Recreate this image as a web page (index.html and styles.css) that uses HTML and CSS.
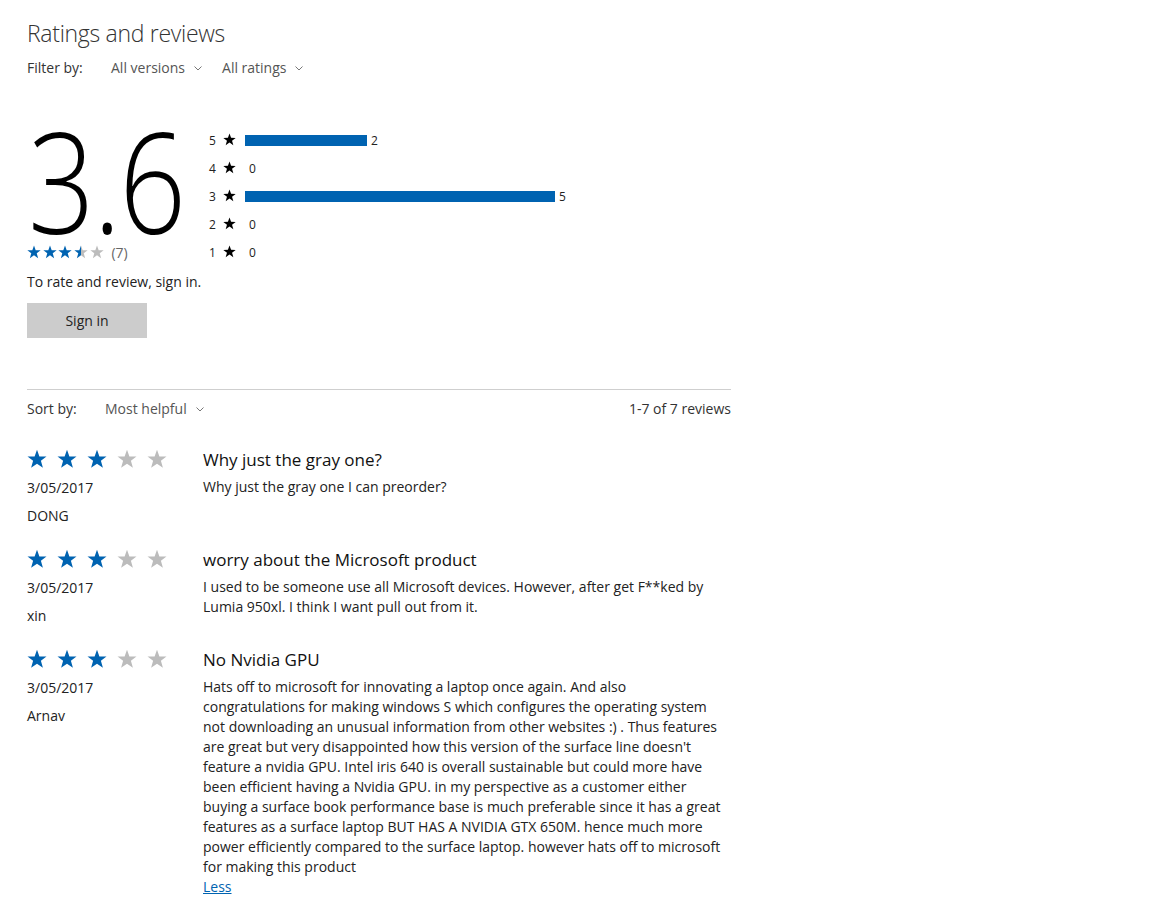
FILE: index.html
```html
<!DOCTYPE html>
<html>
<head>
<meta charset="utf-8">
<link rel="stylesheet" href="styles.css">
</head>
<body>
<svg width="0" height="0" class="defs">
  <defs>
    <symbol id="star" viewBox="0 0 20 20"><polygon points="10,0.8 12.4,7.4 19.5,7.5 13.9,11.8 15.9,18.8 10,14.7 4.1,18.8 6.1,11.8 0.5,7.5 7.6,7.4"/></symbol>
    <symbol id="chev" viewBox="0 0 8 5"><polyline points="0.5,0.5 4,4 7.5,0.5" fill="none" stroke="#777" stroke-width="1"/></symbol>
    <linearGradient id="half"><stop offset="50%" stop-color="#0063b1"/><stop offset="50%" stop-color="#bcbcbc"/></linearGradient>
  </defs>
</svg>
<main class="page">
  <h1 class="title">Ratings and reviews</h1>
  <div class="filter">
    <span class="filter-label">Filter by:</span>
    <span class="dropdown">All versions<svg class="chev"><use href="#chev"/></svg></span>
    <span class="dropdown">All ratings<svg class="chev"><use href="#chev"/></svg></span>
  </div>

  <section class="summary">
    <div class="score">
      <div class="big">3.6</div>
      <div class="mini">
        <svg class="s on"><use href="#star"/></svg>
        <svg class="s on"><use href="#star"/></svg>
        <svg class="s on"><use href="#star"/></svg>
        <svg class="s half"><use href="#star"/></svg>
        <svg class="s off"><use href="#star"/></svg>
        <span class="count">(7)</span>
      </div>
    </div>
    <div class="hist">
      <div class="hrow"><span class="hn">5</span><svg class="hs"><use href="#star"/></svg><span class="bar" style="width:122px"></span><span class="hc">2</span></div>
      <div class="hrow"><span class="hn">4</span><svg class="hs"><use href="#star"/></svg><span class="bar" style="width:0px"></span><span class="hc">0</span></div>
      <div class="hrow"><span class="hn">3</span><svg class="hs"><use href="#star"/></svg><span class="bar" style="width:310px"></span><span class="hc">5</span></div>
      <div class="hrow"><span class="hn">2</span><svg class="hs"><use href="#star"/></svg><span class="bar" style="width:0px"></span><span class="hc">0</span></div>
      <div class="hrow"><span class="hn">1</span><svg class="hs"><use href="#star"/></svg><span class="bar" style="width:0px"></span><span class="hc">0</span></div>
    </div>
  </section>

  <p class="signin-text">To rate and review, sign in.</p>
  <button class="signin">Sign in</button>

  <div class="sortbar">
    <div class="sort"><span class="filter-label">Sort by:</span><span class="dropdown">Most helpful<svg class="chev"><use href="#chev"/></svg></span></div>
    <span class="total">1-7 of 7 reviews</span>
  </div>

  <article class="review">
    <div class="meta">
      <div class="stars">
        <svg class="r on"><use href="#star"/></svg><svg class="r on"><use href="#star"/></svg><svg class="r on"><use href="#star"/></svg><svg class="r off"><use href="#star"/></svg><svg class="r off"><use href="#star"/></svg>
      </div>
      <div class="date">3/05/2017</div>
      <div class="name">DONG</div>
    </div>
    <div class="content">
      <h2 class="rtitle">Why just the gray one?</h2>
      <p class="body">Why just the gray one I can preorder?</p>
    </div>
  </article>

  <article class="review">
    <div class="meta">
      <div class="stars">
        <svg class="r on"><use href="#star"/></svg><svg class="r on"><use href="#star"/></svg><svg class="r on"><use href="#star"/></svg><svg class="r off"><use href="#star"/></svg><svg class="r off"><use href="#star"/></svg>
      </div>
      <div class="date">3/05/2017</div>
      <div class="name">xin</div>
    </div>
    <div class="content">
      <h2 class="rtitle">worry about the Microsoft product</h2>
      <p class="body">I used to be someone use all Microsoft devices. However, after get F**ked by Lumia 950xl. I think I want pull out from it.</p>
    </div>
  </article>

  <article class="review">
    <div class="meta">
      <div class="stars">
        <svg class="r on"><use href="#star"/></svg><svg class="r on"><use href="#star"/></svg><svg class="r on"><use href="#star"/></svg><svg class="r off"><use href="#star"/></svg><svg class="r off"><use href="#star"/></svg>
      </div>
      <div class="date">3/05/2017</div>
      <div class="name">Arnav</div>
    </div>
    <div class="content">
      <h2 class="rtitle">No Nvidia GPU</h2>
      <p class="body">Hats off to microsoft for innovating a laptop once again. And also congratulations for making windows S which configures the operating system not downloading an unusual information from other websites :) . Thus features are great but very disappointed how this version of the surface line doesn't feature a nvidia GPU. Intel iris 640 is overall sustainable but could more have been efficient having a Nvidia GPU. in my perspective as a customer either buying a surface book performance base is much preferable since it has a great features as a surface laptop BUT HAS A NVIDIA GTX 650M. hence much more power efficiently compared to the surface laptop. however hats off to microsoft for making this product</p>
      <a class="less" href="#">Less</a>
    </div>
  </article>
</main>
</body>
</html>
```

FILE: styles.css
```css
html, body {
  margin: 0;
  padding: 0;
  background: #fff;
}
body {
  font-family: "Open Sans", "Noto Sans", sans-serif;
  color: #222;
  font-size: 14px;
}
.defs { position: absolute; }
.page {
  width: 704px;
  padding: 16px 0 0 27px;
}
.title {
  margin: 0;
  font-weight: 300;
  font-size: 23px;
  line-height: 34px;
  color: #333;
  letter-spacing: -0.3px;
}
.filter {
  display: flex;
  align-items: center;
  height: 34px;
}
.filter-label {
  width: 84px;
  color: #333;
}
.dropdown {
  display: inline-flex;
  align-items: center;
  color: #555;
  margin-right: 20px;
}
.chev {
  width: 8px;
  height: 5px;
  margin-left: 9px;
  margin-top: 2px;
}
.summary {
  display: flex;
  margin-top: 36px;
}
.score {
  width: 182px;
  flex: none;
}
.big {
  font-weight: 300;
  font-size: 141px;
  line-height: 118px;
  color: #000;
  letter-spacing: -2px;
  height: 122px;
  transform: scaleX(0.83);
  transform-origin: 0 0;
  margin-left: 1px;
}
.mini {
  display: flex;
  align-items: center;
  height: 20px;
}
.s {
  width: 14px;
  height: 14px;
  margin-right: 1.7px;
}
.s.on { fill: #0063b1; }
.s.off { fill: #bcbcbc; }
.s.half { fill: url(#half); }
.count {
  margin-left: 6px;
  color: #666;
}
.hist {
  padding-top: 6px;
}
.hrow {
  display: flex;
  align-items: center;
  height: 28px;
  font-size: 12px;
}
.hn {
  width: 10px;
  color: #222;
}
.hs {
  width: 13px;
  height: 13px;
  fill: #000;
  margin: 0 9px 1px 4px;
}
.bar {
  height: 11px;
  background: #0063b1;
}
.hc {
  margin-left: 4px;
}
.signin-text {
  margin: 5px 0 0;
  line-height: 22px;
  color: #222;
}
.signin {
  margin-top: 10px;
  width: 120px;
  height: 35px;
  border: 0;
  background: #cccccc;
  font-family: inherit;
  font-size: 14px;
  color: #222;
  padding: 0;
}
.sortbar {
  margin-top: 51px;
  border-top: 1px solid #cfcfcf;
  display: flex;
  justify-content: space-between;
  align-items: center;
  height: 37px;
  color: #333;
}
.sort {
  display: flex;
  align-items: center;
}
.sort .filter-label {
  width: 78px;
}
.total {
  color: #333;
}
.review {
  display: flex;
  margin-top: 17px;
}
.review + .review {
  margin-top: 14px;
}
.meta {
  width: 176px;
  flex: none;
}
.stars {
  display: flex;
  height: 30px;
  align-items: center;
}
.r {
  width: 20px;
  height: 20px;
  margin-right: 10px;
}
.r.on { fill: #0063b1; }
.r.off { fill: #bcbcbc; }
.date, .name {
  line-height: 28px;
}
.content {
  flex: 1;
}
.rtitle {
  margin: 0;
  font-weight: 400;
  font-size: 17px;
  line-height: 31px;
  color: #111;
}
.body {
  margin: 2px 0 0;
  line-height: 20px;
  color: #222;
}
.less {
  color: #0063b1;
  line-height: 20px;
  display: inline-block;
}
```
